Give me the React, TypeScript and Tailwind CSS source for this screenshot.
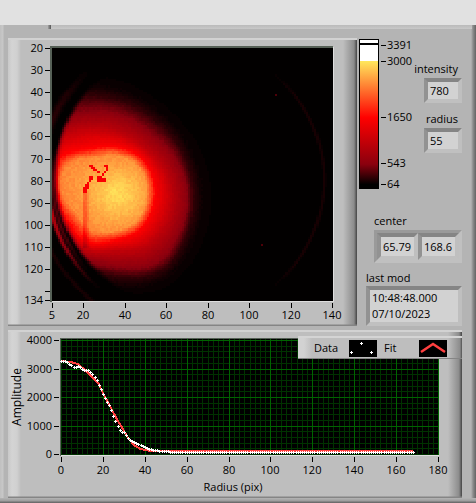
import React from 'react';

const COLS = 136;
const ROWS = 115;
const CELL_W = 281 / COLS;
const CELL_H = 253 / ROWS;
const FONT = '"Open Sans", "Noto Sans", sans-serif';

// Radius of each intensity contour around the spot, one entry per 30 degrees clockwise from the right
const CONTOURS = [
  { value: 2440, radii: [31, 33, 36, 39, 44, 44, 52, 54, 40, 37, 35, 33] },
  { value: 1650, radii: [40, 41, 45, 48, 57, 56, 62, 65, 50, 45, 43, 41] },
  { value: 1000, radii: [57, 60, 63, 60, 66, 64, 70, 84, 73, 61, 54, 54] },
  { value: 543, radii: [72, 76, 82, 75, 74, 72, 80, 100, 89, 79, 69, 69] },
  { value: 230, radii: [78, 83, 91, 84, 80, 78, 90, 118, 107, 93, 82, 78] },
  { value: 110, radii: [86, 91, 99, 94, 88, 86, 100, 134, 120, 103, 91, 86] },
  { value: 64, radii: [104, 108, 114, 106, 98, 92, 110, 150, 134, 120, 106, 102] },
];

const COLOR_STOPS: [number, number[]][] = [
  [64, [0, 0, 0]],
  [543, [138, 0, 14]],
  [1650, [255, 0, 0]],
  [3000, [255, 232, 92]],
];

// Scratches on the sensor, in plot pixels
const SCRATCH: [number, number][] = [
  [39, 117], [41, 119], [43, 121], [45, 123], [47, 125], [52, 118], [54, 118], [54, 120], [54, 123],
  [52, 125], [50, 127], [47, 128], [47, 130], [49, 130], [47, 132], [49, 132], [51, 132], [53, 132],
  [47, 134], [49, 134], [38, 130], [40, 130], [38, 132], [38, 134], [36, 136], [35, 138], [33, 140],
  [35, 140], [33, 143],
];

function noise(x: number, y: number) {
  const s = Math.sin(x * 127.1 + y * 311.7) * 43758.5453;
  return s - Math.floor(s) - 0.5;
}

function bump(d: number, width: number) {
  return Math.exp(-(d * d) / (width * width));
}

function smooth(a: number, b: number, v: number) {
  const t = Math.min(1, Math.max(0, (v - a) / (b - a)));
  return t * t * (3 - 2 * t);
}

// Catmull-Rom through the contour's samples
function radiusAt(radii: number[], i: number, f: number) {
  const p0 = radii[(i + 11) % 12];
  const p1 = radii[i];
  const p2 = radii[(i + 1) % 12];
  const p3 = radii[(i + 2) % 12];
  return p1 + 0.5 * f * (p2 - p0 + f * (2 * p0 - 5 * p1 + 4 * p2 - p3 + f * (3 * (p1 - p2) + p3 - p0)));
}

function intensityAt(col: number, row: number) {
  const x = (col + 0.5) * CELL_W;
  const y = (row + 0.5) * CELL_H;
  const dx = x - 63;
  const dy = y - 144;
  const r = Math.hypot(dx, dy);
  const turn = ((Math.atan2(dy, dx) / (2 * Math.PI) + 1) % 1) * 12;
  const i = Math.floor(turn) % 12;
  const f = turn - Math.floor(turn);

  let prevR = 0;
  let prevV = 2720;
  let v = 64;
  for (const c of CONTOURS) {
    const cr = radiusAt(c.radii, i, f);
    if (r < cr) {
      v = prevV + ((c.value - prevV) * (r - prevR)) / (cr - prevR);
      break;
    }
    prevR = cr;
    prevV = c.value;
  }
  if (v > 1700) {
    v += 240 * bump(Math.hypot(x - 72, y - 148), 30);
    v += noise(col, row) * 120;
  } else if (v > 100) {
    v += noise(col, row) * Math.min(60, v * 0.1);
  }
  if (x > 31 && x < 38 && y > 143 && y < 200) v -= x < 35 ? 330 : 150;
  for (const [sx, sy] of SCRATCH) {
    if (Math.abs(x - sx) < 1.3 && Math.abs(y - sy) < 1.3) v = Math.min(v, 1600);
  }

  // aperture edge with its diffraction rings
  const ax = x - 136;
  const ay = y - 132;
  const ar = Math.hypot(ax, ay);
  if (ax < 0) {
    const edge = 131 + (ay < 0 ? 3 * smooth(0, -90, ay) : -3 * smooth(0, 90, ay));
    v = 64 + (v - 64) * (1 - smooth(edge - 3, edge + 4, ar));
    const near = smooth(0, 40, -ax - 45);
    if (ay > 0) {
      v += 300 * bump(ar - 135, 1.8) * near * smooth(100, 40, ay);
      v += 900 * bump(ar - 140, 2) * near * smooth(115, 30, ay);
      v += 90 * bump(ar - 154, 2) * near;
    } else {
      v += 130 * bump(ar - 148, 4) * near * smooth(-120, -70, ay);
      v += 250 * bump(ar - 135, 2) * near * smooth(-40, 0, ay);
    }
  } else {
    v += 90 * bump(ar - 136, 1.6) * smooth(70, 120, ax);
  }
  if ((col === 108 && row === 21) || (col === 101 && row === 89)) v += 260;
  return v;
}

function colorOf(v: number) {
  for (let i = 1; i < COLOR_STOPS.length; i++) {
    const [hi, b] = COLOR_STOPS[i];
    const [lo, a] = COLOR_STOPS[i - 1];
    if (v <= hi) {
      const t = Math.max(0, (v - lo) / (hi - lo));
      return `rgb(${a.map((n, k) => Math.round(n + (b[k] - n) * t)).join(',')})`;
    }
  }
  return 'rgb(255,232,92)';
}

function buildHeat() {
  const layers = new Map<number, string>();
  for (let row = 0; row < ROWS; row++) {
    for (let col = 0; col < COLS; col++) {
      const level = Math.round(intensityAt(col, row) / 24) * 24;
      if (level <= 72) continue;
      layers.set(level, (layers.get(level) ?? '') + `M${col} ${row}h1v1h-1z`);
    }
  }
  return [...layers];
}

const HEAT = buildHeat();

const HEAT_Y = [
  [20, 10], [30, 32], [40, 54], [50, 76], [60, 98], [70, 121], [80, 143], [90, 165],
  [100, 187], [110, 209], [120, 231], [0, 253], [134, 262],
];
const HEAT_X = [[5, 44], [20, 75], [40, 117], [60, 158], [80, 200], [100, 241], [120, 283], [140, 324]];

function HeatChart() {
  return (
    <svg viewBox="0 0 349 288" className="block w-full" fontFamily={FONT} fontSize="11" role="img" aria-label="Intensity image">
      <rect x="43" y="9" width="283" height="255" fill="#dedede" />
      <path d="M43 264V9H325" fill="none" stroke="#566056" strokeWidth="2" />
      <rect x="44" y="10" width="281" height="253" fill="#020000" />
      <svg x="44" y="10" width="281" height="253" viewBox={`0 0 ${COLS} ${ROWS}`} preserveAspectRatio="none" shapeRendering="crispEdges">
        {HEAT.map(([level, d]) => (
          <path key={level} d={d} fill={colorOf(level)} />
        ))}
      </svg>
      {HEAT_Y.map(([label, y]) => (
        <g key={label}>
          <rect x="37" y={y} width="5" height="1" />
          {label > 0 && <text x="35" y={y + 4} textAnchor="end">{label}</text>}
        </g>
      ))}
      {HEAT_X.map(([label, x]) => (
        <g key={label}>
          <rect x={x} y="265" width="1" height="5" />
          <text x={x} y="281" textAnchor="middle">{label}</text>
        </g>
      ))}
    </svg>
  );
}

const RAMP_LABELS = [[3391, 7], [3000, 23], [1650, 79], [543, 125], [64, 146]];

function ColorRamp() {
  return (
    <svg viewBox="0 0 56 152" className="block w-14 shrink-0" fontFamily={FONT} fontSize="11" role="img" aria-label="Color scale">
      <defs>
        <linearGradient id="ramp" x1="0" y1="0" x2="0" y2="1">
          <stop offset="0" stopColor="#ffe85c" />
          <stop offset="0.45" stopColor="#ff0000" />
          <stop offset="0.82" stopColor="#8a000e" />
          <stop offset="0.98" stopColor="#000000" />
        </linearGradient>
      </defs>
      <rect x="2" y="1" width="20" height="150" />
      <rect x="3" y="2" width="18" height="22" fill="#fff" />
      <rect x="3" y="5" width="18" height="2" />
      <rect x="3" y="23" width="18" height="126" fill="url(#ramp)" />
      {RAMP_LABELS.map(([label, y]) => (
        <g key={label}>
          <rect x="24" y={y} width="5" height="1" />
          <text x="30" y={y + 4}>{label}</text>
        </g>
      ))}
    </svg>
  );
}

const DATA = [
  [0, 3263], [3, 3240], [4, 3160], [6, 3053], [8, 3076], [9, 3040], [10, 2994], [11, 2950], [13, 2950],
  [14, 2880], [15, 2807], [16, 2700], [17, 2600], [18, 2409], [19, 2280], [20, 2105], [21, 1977],
  [22, 1825], [23, 1720], [24, 1544], [25, 1333], [26, 1146], [27, 994], [28, 842], [29, 772], [30, 772],
  [31, 680], [32, 573], [33, 503], [35, 410], [38, 304], [41, 210], [44, 140], [50, 94], [56, 75], [168, 75],
];
const FIT = [
  [0, 3270], [5, 3220], [8, 3160], [10, 3040], [13, 2840], [15, 2690], [18, 2456], [20, 2140], [24, 1600],
  [27, 1170], [29, 950], [32, 560], [35, 304], [38, 175], [43, 105], [56, 90], [168, 90],
];

const px = (r: number) => 53 + (r * 377) / 180;
const py = (v: number) => 124 - (v * 114) / 4000;

function sample(r: number) {
  const i = Math.max(1, DATA.findIndex(([x]) => x >= r));
  const [x0, y0] = DATA[i - 1];
  const [x1, y1] = DATA[i];
  return y0 + ((y1 - y0) * (r - x0)) / (x1 - x0);
}

const plus = (x: number, y: number) => `M${x - 1} ${y}h3v1h-3zM${x} ${y - 1}h1v3h-1z`;

const DOTS = Array.from({ length: 169 }, (_, r) => plus(Math.round(px(r)), Math.round(py(sample(r))))).join('');

function ProfileChart() {
  const minorX = Array.from({ length: 73 }, (_, i) => Math.round(px(i * 2.5)));
  const minorY = Array.from({ length: 21 }, (_, i) => Math.round(py(i * 200)));
  return (
    <svg viewBox="0 0 454 168" className="block w-full" fontFamily={FONT} fontSize="11" role="img" aria-label="Amplitude against radius">
      <rect x="52" y="8" width="379" height="118" fill="#dedede" />
      <path d="M52 8h378v1H53v117h-1z" fill="#566056" />
      <rect x="53" y="9" width="377" height="116" />
      <g shapeRendering="crispEdges">
        <g fill="#003200">
          {minorX.map((x) => <rect key={x} x={x} y="9" width="1" height="116" />)}
          {minorY.map((y) => <rect key={y} x="53" y={y} width="377" height="1" />)}
        </g>
        <g fill="#006400">
          {minorX.filter((_, i) => i % 8 === 0 && i > 0).map((x) => <rect key={x} x={x} y="9" width="1" height="116" />)}
          {minorY.filter((_, i) => i % 5 === 0 && i > 0).map((y) => <rect key={y} x="53" y={y} width="377" height="1" />)}
        </g>
        <polyline points={FIT.map(([r, v]) => `${px(r)},${py(v)}`).join(' ')} fill="none" stroke="#ff4040" strokeWidth="2" />
        <path d={DOTS} fill="#fff" />
      </g>
      {[4000, 3000, 2000, 1000, 0].map((v) => (
        <g key={v}>
          <rect x="46" y={Math.round(py(v))} width="5" height="1" />
          <text x="44" y={Math.round(py(v)) + 4} textAnchor="end">{v}</text>
        </g>
      ))}
      {[0, 20, 40, 60, 80, 100, 120, 140, 160, 180].map((r) => (
        <g key={r}>
          <rect x={Math.round(px(r))} y="127" width="1" height="5" />
          <text x={Math.round(px(r))} y="144" textAnchor="middle">{r}</text>
        </g>
      ))}
      <text x="225" y="161" textAnchor="middle">Radius (pix)</text>
      <text transform="translate(13 67) rotate(-90)" textAnchor="middle" fontSize="12">Amplitude</text>
    </svg>
  );
}

function Legend() {
  return (
    <div className="absolute top-[6px] right-0 flex h-[23px] w-[164px] items-center border-t-2 border-b border-t-[#d4d4d4] border-b-[#858585] bg-[linear-gradient(90deg,#d2d2d2_0,#d2d2d2_6px,#bebebe_14px,#bebebe_150px,#8c8c8c_162px,#505050_164px)] pl-4">
      <span className="w-[35px]">Data</span>
      <svg viewBox="0 0 28 17" className="h-[17px] w-7" shapeRendering="crispEdges" aria-hidden="true">
        <rect width="28" height="17" />
        <path d={plus(2, 12) + plus(12, 3) + plus(22, 12)} fill="#fff" />
      </svg>
      <span className="w-[42px] pl-[7px]">Fit</span>
      <svg viewBox="0 0 28 17" className="h-[17px] w-7" aria-hidden="true">
        <rect width="28" height="17" />
        <path d="M2 12L14 4L26 12" fill="none" stroke="#ff4040" strokeWidth="2.5" />
      </svg>
    </div>
  );
}

const sunken = 'border-4 border-t-[#858585] border-l-[#929292] border-r-[#bfbfbf] border-b-[#c0c0c0] bg-[#d2d2d2]';

interface FieldProps {
  id: string;
  label: string;
  value: string;
}

function Field({ id, label, value }: FieldProps) {
  return (
    <div className="flex flex-col items-end">
      <label htmlFor={id} className="h-[17px] pr-1 leading-4">{label}</label>
      <input id={id} readOnly defaultValue={value} className={`h-[25px] w-[38px] pl-0.5 outline-none ${sunken}`} />
    </div>
  );
}

export default function App() {
  return (
    <div className="flex min-h-screen flex-col bg-[#e1e1e1] font-['Open_Sans','Noto_Sans',sans-serif] text-[11px] leading-4 text-black">
      <header className="h-[25px] shrink-0" />
      <main className="flex-1 bg-[linear-gradient(90deg,#c0c0c0_0,#c8c8c8_3px,#b4b4b4_4px,#b4b4b4_calc(100%-5px),#8c8c8c_calc(100%-3px),#646464_100%)]">
        <div className="flex h-[13px] pl-12">
          <div className="h-1 w-[3px] bg-[linear-gradient(90deg,#a0a0a0,#555)]" />
          <div className="mr-1 h-1 flex-1 bg-[linear-gradient(#bababa,#c8c8c8)]" />
        </div>
        <div className="flex flex-col gap-1 pr-[14px] pl-2">
          <div className="flex">
            <section className="min-w-0 flex-1 bg-[linear-gradient(#d2d2d2_0,#d2d2d2_2px,transparent_2px,transparent_calc(100%-2px),#858585_calc(100%-1px),#858585_100%),linear-gradient(90deg,#c8c8c8_0,#d4d4d4_4px,#d0d0d0_9px,#bebebe_13px,#bebebe_calc(100%-14px),#8c8c8c_calc(100%-3px),#444_100%)]">
              <HeatChart />
            </section>
            <aside className="flex w-[105px] shrink-0 flex-col">
              <div className="flex">
                <ColorRamp />
                <div className="flex flex-1 flex-col gap-2 pt-[23px]">
                  <Field id="intensity" label="intensity" value="780" />
                  <Field id="radius" label="radius" value="55" />
                </div>
              </div>
              <fieldset className="mt-[23px] ml-[17px]">
                <legend className="h-[17px] leading-4">center</legend>
                <div className="flex h-[33px] border-[3px] border-t-[#9a9a9a] border-r-[#c0c0c0] border-b-[#c0c0c0] border-l-[#9a9a9a]">
                  <input aria-label="center x" readOnly defaultValue="65.79" className={`w-[41px] pl-0.5 outline-none ${sunken}`} />
                  <input aria-label="center y" readOnly defaultValue="168.6" className={`w-[41px] pl-0.5 outline-none ${sunken}`} />
                </div>
              </fieldset>
              <div className="mt-[7px] ml-[9px] flex flex-col">
                <label htmlFor="last-mod" className="h-4 leading-4">last mod</label>
                <textarea
                  id="last-mod"
                  readOnly
                  rows={2}
                  defaultValue={'10:48:48.000\n07/10/2023'}
                  className={`h-10 resize-none overflow-hidden pl-0.5 leading-4 outline-none ${sunken}`}
                />
              </div>
            </aside>
          </div>
          <section className="relative bg-[linear-gradient(#d2d2d2_0,#d2d2d2_2px,transparent_2px,transparent_calc(100%-2px),#858585_calc(100%-1px),#858585_100%),linear-gradient(90deg,#c8c8c8_0,#d4d4d4_4px,#d0d0d0_9px,#bebebe_13px,#bebebe_calc(100%-14px),#8c8c8c_calc(100%-3px),#444_100%)]">
            <ProfileChart />
            <Legend />
          </section>
        </div>
        <div className="h-[5px] bg-[linear-gradient(#b4b4b4,#a0a0a0_50%,#606060)]" />
      </main>
    </div>
  );
}
